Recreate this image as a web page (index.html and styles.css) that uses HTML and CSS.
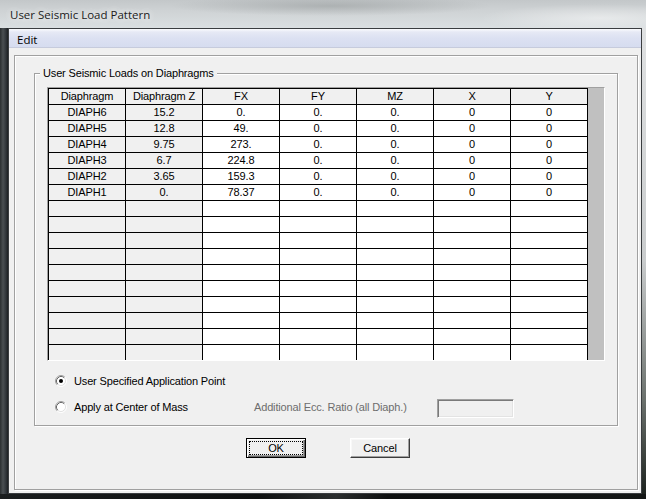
FILE: index.html
```html
<!DOCTYPE html>
<html>
<head>
<meta charset="utf-8">
<title>User Seismic Load Pattern</title>
<link rel="stylesheet" href="styles.css">
</head>
<body>
<div class="screen">
  <div class="titlebar"><span class="title">User Seismic Load Pattern</span></div>
  <div class="frame-row">
    <div class="chrome-left"></div>
    <div class="client">
      <div class="menubar"><span class="menu-item">Edit</span></div>
      <div class="dlg-body">
        <div class="panel">
          <div class="group">
            <span class="group-label">User Seismic Loads on Diaphragms</span>
            <div class="grid-wrap">
              <div class="grid">
                <div class="c h">Diaphragm</div><div class="c h">Diaphragm Z</div><div class="c h">FX</div><div class="c h">FY</div><div class="c h">MZ</div><div class="c h">X</div><div class="c h">Y</div>
                <div class="c f">DIAPH6</div><div class="c f">15.2</div><div class="c">0.</div><div class="c">0.</div><div class="c">0.</div><div class="c">0</div><div class="c">0</div>
                <div class="c f">DIAPH5</div><div class="c f">12.8</div><div class="c">49.</div><div class="c">0.</div><div class="c">0.</div><div class="c">0</div><div class="c">0</div>
                <div class="c f">DIAPH4</div><div class="c f">9.75</div><div class="c">273.</div><div class="c">0.</div><div class="c">0.</div><div class="c">0</div><div class="c">0</div>
                <div class="c f">DIAPH3</div><div class="c f">6.7</div><div class="c">224.8</div><div class="c">0.</div><div class="c">0.</div><div class="c">0</div><div class="c">0</div>
                <div class="c f">DIAPH2</div><div class="c f">3.65</div><div class="c">159.3</div><div class="c">0.</div><div class="c">0.</div><div class="c">0</div><div class="c">0</div>
                <div class="c f">DIAPH1</div><div class="c f">0.</div><div class="c">78.37</div><div class="c">0.</div><div class="c">0.</div><div class="c">0</div><div class="c">0</div>
                <div class="c f"></div><div class="c f"></div><div class="c"></div><div class="c"></div><div class="c"></div><div class="c"></div><div class="c"></div>
                <div class="c f"></div><div class="c f"></div><div class="c"></div><div class="c"></div><div class="c"></div><div class="c"></div><div class="c"></div>
                <div class="c f"></div><div class="c f"></div><div class="c"></div><div class="c"></div><div class="c"></div><div class="c"></div><div class="c"></div>
                <div class="c f"></div><div class="c f"></div><div class="c"></div><div class="c"></div><div class="c"></div><div class="c"></div><div class="c"></div>
                <div class="c f"></div><div class="c f"></div><div class="c"></div><div class="c"></div><div class="c"></div><div class="c"></div><div class="c"></div>
                <div class="c f"></div><div class="c f"></div><div class="c"></div><div class="c"></div><div class="c"></div><div class="c"></div><div class="c"></div>
                <div class="c f"></div><div class="c f"></div><div class="c"></div><div class="c"></div><div class="c"></div><div class="c"></div><div class="c"></div>
                <div class="c f"></div><div class="c f"></div><div class="c"></div><div class="c"></div><div class="c"></div><div class="c"></div><div class="c"></div>
                <div class="c f"></div><div class="c f"></div><div class="c"></div><div class="c"></div><div class="c"></div><div class="c"></div><div class="c"></div>
                <div class="c f"></div><div class="c f"></div><div class="c"></div><div class="c"></div><div class="c"></div><div class="c"></div><div class="c"></div>
              </div>
              <div class="vscroll"></div>
            </div>
            <div class="options">
              <div class="opt-row">
                <svg class="radio" width="12" height="12" viewBox="0 0 12 12">
                  <circle cx="6" cy="6" r="4.5" fill="#fff"/>
                  <path d="M2.11 9.89 A5.5 5.5 0 0 1 9.89 2.11" fill="none" stroke="#a0a0a0"/>
                  <path d="M9.89 2.11 A5.5 5.5 0 0 1 2.11 9.89" fill="none" stroke="#ffffff"/>
                  <path d="M2.82 9.18 A4.5 4.5 0 0 1 9.18 2.82" fill="none" stroke="#696969"/>
                  <path d="M9.18 2.82 A4.5 4.5 0 0 1 2.82 9.18" fill="none" stroke="#e3e3e3"/>
                  <circle cx="6" cy="6" r="2" fill="#000"/>
                </svg>
                <span class="opt-label">User Specified Application Point</span>
              </div>
              <div class="opt-row">
                <svg class="radio" width="12" height="12" viewBox="0 0 12 12">
                  <circle cx="6" cy="6" r="4.5" fill="#fff"/>
                  <path d="M2.11 9.89 A5.5 5.5 0 0 1 9.89 2.11" fill="none" stroke="#a0a0a0"/>
                  <path d="M9.89 2.11 A5.5 5.5 0 0 1 2.11 9.89" fill="none" stroke="#ffffff"/>
                  <path d="M2.82 9.18 A4.5 4.5 0 0 1 9.18 2.82" fill="none" stroke="#696969"/>
                  <path d="M9.18 2.82 A4.5 4.5 0 0 1 2.82 9.18" fill="none" stroke="#e3e3e3"/>
                </svg>
                <span class="opt-label wide">Apply at Center of Mass</span>
                <span class="disabled-label">Additional Ecc. Ratio (all Diaph.)</span>
                <span class="textbox"></span>
              </div>
            </div>
          </div>
          <div class="buttons">
            <div class="btn btn-default"><span class="focus">OK</span></div>
            <div class="btn">Cancel</div>
          </div>
        </div>
      </div>
    </div>
    <div class="chrome-right"></div>
  </div>
  <div class="chrome-bottom"></div>
</div>
</body>
</html>
```

FILE: styles.css
```css
html, body {
  margin: 0;
  padding: 0;
  background: #111;
}

.screen {
  width: 646px;
  height: 499px;
  overflow: hidden;
  display: flex;
  flex-direction: column;
  background: #141616;
}

.titlebar {
  height: 28px;
  flex: none;
  display: flex;
  align-items: center;
  padding-left: 10px;
  background:
    radial-gradient(ellipse 120px 14px at 600px 18px, rgba(255,255,255,0.45), rgba(255,255,255,0)),
    radial-gradient(ellipse 160px 10px at 330px 6px, rgba(120,125,125,0.35), rgba(120,125,125,0)),
    linear-gradient(to bottom, #c3c7c9 0%, #cfd3d5 40%, #dadfe1 100%);
}

.title {
  font-family: "Open Sans", "Noto Sans", sans-serif;
  font-size: 11.5px;
  color: #1b1b1b;
  text-shadow: 0 0 6px rgba(255,255,255,0.9), 0 0 10px rgba(255,255,255,0.7);
  margin-top: 1px;
}

.frame-row {
  height: 466px;
  flex: none;
  display: flex;
}

.chrome-left {
  width: 8px;
  flex: none;
  background: linear-gradient(to right, #2a2e30 0, #4a4f52 3px, #30353a 6px, #1c1f21 8px);
}

.chrome-right {
  width: 4px;
  flex: none;
  background: linear-gradient(to bottom, #dfe1e2 0%, #c9cccd 50%, #6a706c 80%, #1d231f 100%);
}

.chrome-bottom {
  flex: 1;
  background: linear-gradient(to right, #1a1d1e 0, #0e1010 40%, #2b2e2e 52%, #0d0f0f 60%, #141716 100%);
}

.client {
  width: 634px;
  box-sizing: border-box;
  border: 1px solid #3a3d40;
  display: flex;
  flex-direction: column;
  background: #f0f0f0;
}

.menubar {
  height: 18px;
  flex: none;
  border-bottom: 1px solid #c6cbdc;
  background: linear-gradient(to bottom, #fbfcfe 0, #e6e9f5 3px, #dce1f2 50%, #d6dcef 100%);
  display: flex;
  align-items: center;
}

.menu-item {
  font-family: "Open Sans", "Noto Sans", sans-serif;
  font-size: 11.5px;
  color: #000;
  padding-left: 8px;
  margin-top: 2px;
}

.dlg-body {
  flex: 1;
  display: flex;
  padding: 7px 3px 3px 5px;
  font-family: "Liberation Sans", Arial, sans-serif;
  font-size: 11px;
  letter-spacing: -0.15px;
  color: #000;
}

.panel {
  flex: 1;
  display: flex;
  flex-direction: column;
  border: 1px solid #a0a0a0;
  box-shadow: inset 1px 1px 0 #fff, 1px 1px 0 #fff;
}

.group {
  position: relative;
  width: 584px;
  height: 353px;
  box-sizing: border-box;
  margin: 17px 0 0 19px;
  padding: 13px 0 0 12px;
  border: 1px solid #a0a0a0;
  box-shadow: inset 1px 1px 0 #fff, 1px 1px 0 #fff;
}

.group-label {
  position: absolute;
  top: -7px;
  left: 5px;
  padding: 0 3px;
  line-height: 13px;
  background: #f0f0f0;
  white-space: nowrap;
}

.grid-wrap {
  display: flex;
  width: 558px;
  box-sizing: border-box;
  border: 1px solid;
  border-color: #a0a0a0 #fff #fff #a0a0a0;
}

.grid {
  display: grid;
  grid-template-columns: repeat(6, 77px) 78px;
  grid-auto-rows: 16px;
  background: #fff;
}

.c {
  box-sizing: border-box;
  border-top: 1px solid #000;
  border-left: 1px solid #000;
  line-height: 15px;
  text-align: center;
  white-space: nowrap;
  overflow: hidden;
  background: #fff;
}

.c:nth-child(7n) {
  border-right: 1px solid #000;
}

.c.h, .c.f {
  background: #f0f0f0;
}

.vscroll {
  width: 16px;
  background: #c0c0c0;
}

.options {
  display: flex;
  flex-direction: column;
  gap: 6px;
  margin: 10px 0 0 8px;
}

.opt-row {
  height: 20px;
  display: flex;
  align-items: center;
}

.radio {
  flex: none;
  display: block;
}

.opt-label {
  margin-left: 7px;
  white-space: nowrap;
}

.opt-label.wide {
  width: 180px;
}

.disabled-label {
  width: 183px;
  color: #6d6d6d;
  white-space: nowrap;
}

.textbox {
  width: 77px;
  height: 19px;
  box-sizing: border-box;
  margin-top: 2px;
  border: 1px solid;
  border-color: #a0a0a0 #fff #fff #a0a0a0;
  box-shadow: inset 1px 1px 0 #7a7a7a, inset -1px -1px 0 #e3e3e3;
  background: #f0f0f0;
}

.buttons {
  display: flex;
  justify-content: center;
  gap: 44px;
  margin-top: 12px;
  padding-left: 4px;
}

.btn {
  width: 60px;
  height: 20px;
  box-sizing: border-box;
  border: 1px solid;
  border-color: #fff #3c3c3c #3c3c3c #fff;
  box-shadow: inset -1px -1px 0 #a0a0a0, inset 1px 1px 0 #f8f8f8;
  background: #f0f0f0;
  display: flex;
  align-items: center;
  justify-content: center;
  line-height: 16px;
}

.btn-default {
  border-color: #000;
  box-shadow: inset 1px 1px 0 #fff, inset -1px -1px 0 #696969, inset -2px -2px 0 #a0a0a0;
  align-items: stretch;
  justify-content: stretch;
}

.focus {
  flex: 1;
  margin: 2px;
  border: 1px dotted #000;
  text-align: center;
  line-height: 12px;
}
```
